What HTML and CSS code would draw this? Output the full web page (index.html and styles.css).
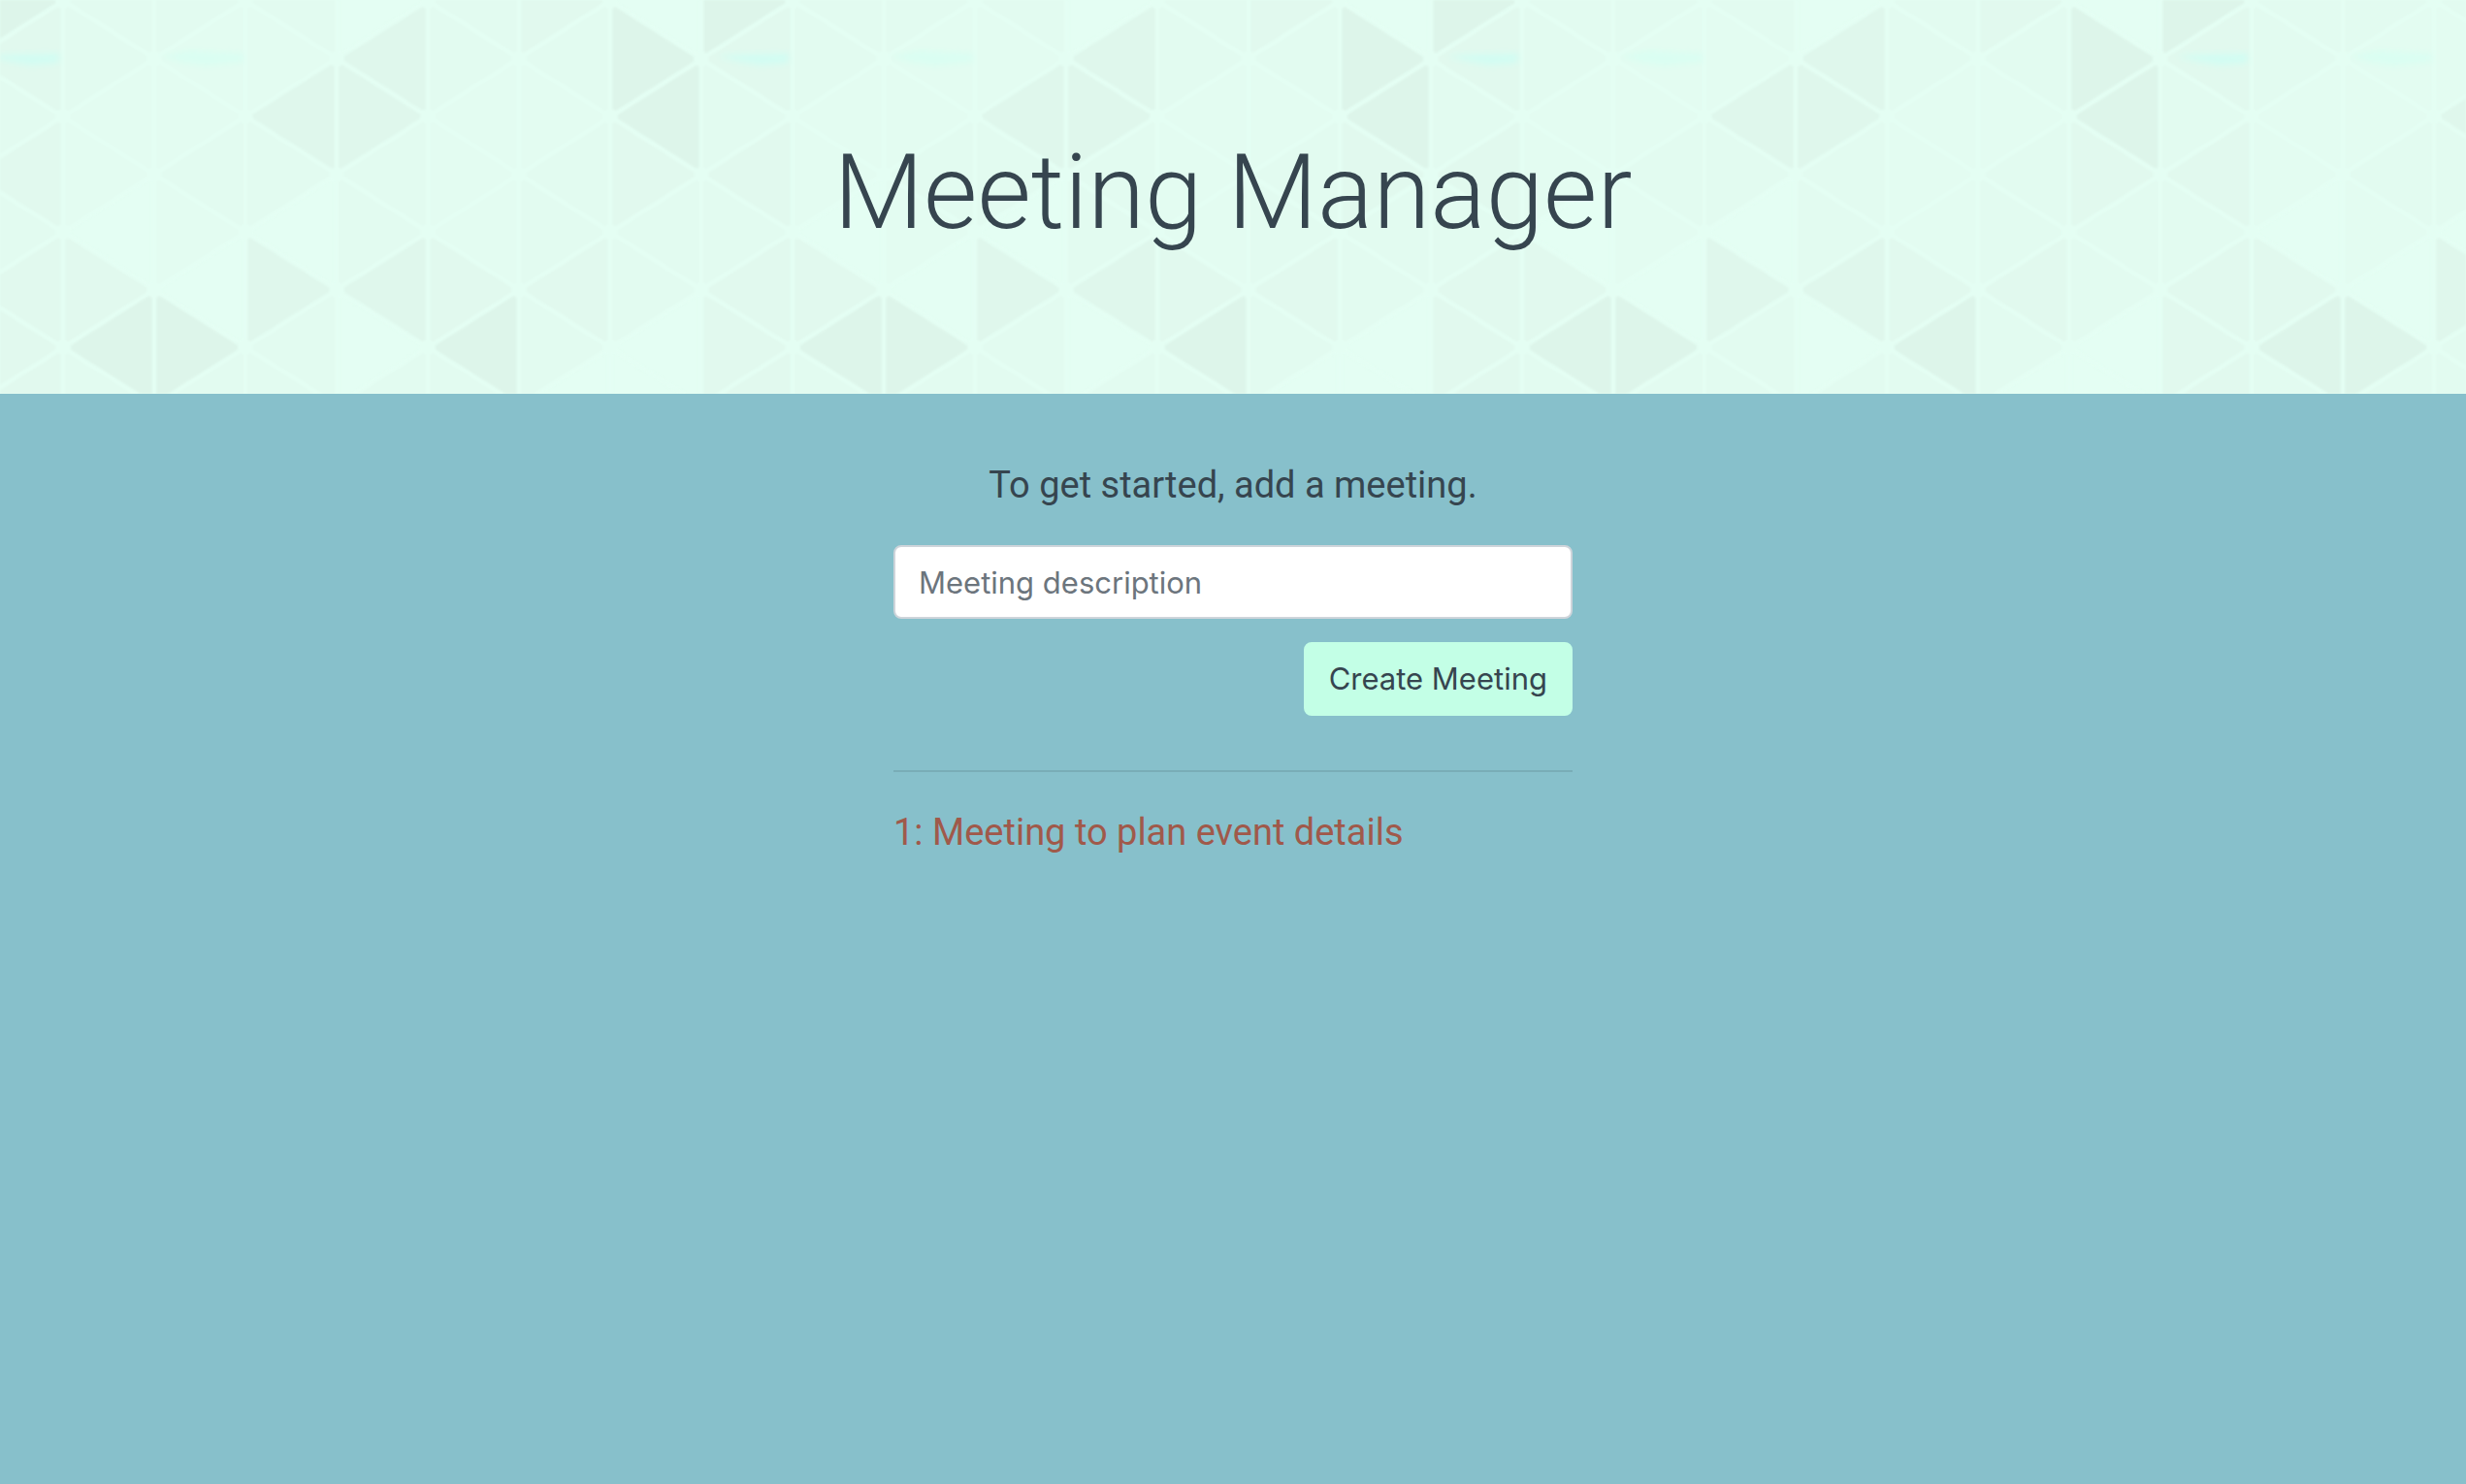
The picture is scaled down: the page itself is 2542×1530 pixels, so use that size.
FILE: index.html
```html
<!DOCTYPE html>
<html lang="en">
<head>
<meta charset="utf-8">
<meta name="viewport" content="width=device-width, initial-scale=1">
<title>Meeting Manager</title>
<link rel="stylesheet" href="styles.css">
</head>
<body>
<header class="hero">
  <svg class="hero-pattern" aria-hidden="true">
    <defs>
      <filter id="soft" x="-20%" y="-80%" width="140%" height="260%"><feGaussianBlur stdDeviation="3"/></filter>
      <pattern id="triangles" x="-29" y="0" width="752" height="480" patternUnits="userSpaceOnUse">
        <g transform="translate(0 1)">
          <!-- palest tiles -->
          <path class="tone-a" d="M94 119l94-60v120z M94 119l94 60-94 60z M188 60l94-60v119z M188 60l94 59-94 60z M188 179l94 59-94 60z M282 0l94 60-94 59z M470 119l94-60v120z M470 119l94 60-94 59z M470 238l94-59v119z M564 60l94 59-94 60z"/>
          <path class="tone-b" d="M0 60l94 59-94 60z M0 179l94 59-94 60z M94 0l94-60v120z M94 0l94 60-94 59z M94 357l94 60-94 59z M188-60l94 60-94 60z M188 179l94-60v119z M188 417l94-60v119z M282 0l94-60v120z M282 119l94 60-94 59z M282 357l94-59v119z M282 357l94 60-94 59z M376 179l94-60v119z M376 179l94 59-94 60z M376 417l94-60v119z M470 0l94-60v120z M470 0l94 60-94 59z M470 357l94 60-94 59z M564 60l94-60v119z M564 179l94-60v119z M564 179l94 59-94 60z M564 298l94 59-94 60z M658 238l94-59v119z M658 238l94 60-94 59z"/>
          <path class="tone-c" d="M0 60l94-60v119z M0 179l94-60v119z M0 298l94-60v119z M0 298l94 59-94 60z M0 417l94-60v119z M94 238l94 60-94 59z M470 238l94 60-94 59z M564-60l94 60-94 60z M564 298l94-60v119z M658 119l94 60-94 59z"/>
          <path class="tone-d" d="M282 119l94-59v119z M282 238l94 60-94 59z M376 60l94-60v119z M376 60l94 59-94 60z M376 298l94-60v119z"/>
          <!-- darkest tiles -->
          <path class="tone-e" d="M0-60l94 60-94 60z M94 357l94-59v119z M188 298l94 59-94 60z M470 357l94-59v119z M658 0l94 60-94 59z M658 119l94-59v119z"/>
          <path class="grid-line" d="M0-10V490M94-10V490M188-10V490M282-10V490M376-10V490M470-10V490M564-10V490M658-10V490M752-10V490"/>
          <path class="grid-line" d="M0-60L752 417M0 60L658 476M0 179L470 476M0 298L282 476M0 417L94 476M188-60L752 298M376-60L752 179M564-60L752 60"/>
          <path class="grid-line" d="M0 60L188-60M0 179L376-60M0 298L564-60M0 417L752-60M94 476L752 60M282 476L752 179M470 476L752 298M658 476L752 417"/>
          <path class="grid-node" d="M94 0v0M282 0v0M470 0v0M658 0v0M0 60v0M188 60v0M376 60v0M564 60v0M752 60v0M94 119v0M282 119v0M470 119v0M658 119v0M0 179v0M188 179v0M376 179v0M564 179v0M752 179v0M94 238v0M282 238v0M470 238v0M658 238v0M0 298v0M188 298v0M376 298v0M564 298v0M752 298v0M94 357v0M282 357v0M470 357v0M658 357v0"/>
          <path class="glint" filter="url(#soft)" d="M16 57L46 55L90 54V64L60 66L36 62z"/>
          <path class="glint glint-pale" filter="url(#soft)" d="M194 57L225 51L255 53L280 54V63L240 67L215 63z"/>
        </g>
      </pattern>
    </defs>
    <rect class="hero-pattern-fill" width="100%" height="100%" fill="url(#triangles)"/>
  </svg>
  <h1 class="hero-title">Meeting Manager</h1>
</header>
<main class="content">
  <form class="meeting-form">
    <label class="lead" for="description">To get started, add a meeting.</label>
    <input class="text-field" id="description" type="text" placeholder="Meeting description">
    <button class="button" type="submit">Create Meeting</button>
  </form>
  <hr class="divider">
  <a class="meeting-link" href="#meeting-1">1: Meeting to plan event details</a>
</main>
</body>
</html>
```
FILE: styles.css
```css
* {
  box-sizing: border-box;
}

body {
  margin: 0;
  background: #87c0cb;
  color: #36454f;
  font-family: Inter, "Liberation Sans", sans-serif;
  font-size: 31px;
  line-height: 48px;
}

.hero {
  position: relative;
  padding: 132px 32px 140px;
  background: #e4fef3;
  text-align: center;
}

.hero-pattern {
  position: absolute;
  inset: 0;
  width: 100%;
  height: 100%;
}

.hero-pattern-fill { filter: blur(1px); }

.tone-a { fill: #e3fcf1; }
.tone-b { fill: #e2fbf0; }
.tone-c { fill: #e1f9ee; }
.tone-d { fill: #dff7ec; }
.tone-e { fill: #ddf5ea; }

.grid-line {
  fill: none;
  stroke: #e4fef3;
  stroke-width: 5;
}

.grid-node {
  stroke: #e4fef3;
  stroke-width: 16;
  stroke-linecap: round;
}

.glint { fill: #d2fdf3; }
.glint-pale { fill: #dafef2; }

.hero-title {
  position: relative;
  margin: 0;
  font-family: Roboto, "Liberation Sans", sans-serif;
  font-size: 107px;
  font-weight: 300;
  line-height: 134px;
}

.content {
  max-width: 764px;
  margin: 0 auto;
  padding: 64px 32px;
}

.meeting-form {
  display: flex;
  flex-direction: column;
}

.lead {
  margin-bottom: 32px;
  font-family: Roboto, "Liberation Sans", sans-serif;
  font-size: 38px;
  line-height: 60px;
  text-align: center;
}

.text-field {
  width: 100%;
  height: 76px;
  margin-bottom: 24px;
  padding: 12px 24px;
  border: 2px solid #ced4da;
  border-radius: 8px;
  background: #fff;
  color: #495057;
  font: inherit;
}

.text-field::placeholder {
  color: #6c757d;
  opacity: 1;
}

.button {
  align-self: flex-end;
  padding: 12px 24px;
  border: 2px solid #c3ffe6;
  border-radius: 8px;
  background: #c3ffe6;
  color: inherit;
  font: inherit;
}

.divider {
  margin: 56px 0 32px;
  border: 0;
  border-top: 2px solid #79adb7;
}

.meeting-link {
  display: block;
  color: #a0594a;
  font-family: Roboto, "Liberation Sans", sans-serif;
  font-size: 38px;
  line-height: 60px;
  text-decoration: none;
}
```
